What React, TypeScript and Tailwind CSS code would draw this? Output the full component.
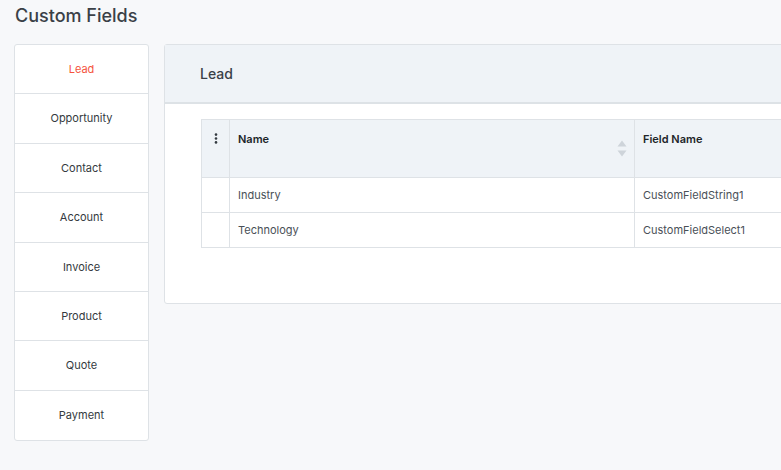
import { useState } from "react";

const tabs = [
  "Lead",
  "Opportunity",
  "Contact",
  "Account",
  "Invoice",
  "Product",
  "Quote",
  "Payment",
];

const rows = [
  { name: "Industry", field: "CustomFieldString1" },
  { name: "Technology", field: "CustomFieldSelect1" },
];

export default function App() {
  const [active, setActive] = useState("Lead");

  return (
    <div
      className="w-[781px] h-[470px] overflow-hidden bg-[#f7f8fa] text-[#343a40]"
      style={{ fontFamily: "Inter, 'Noto Sans', sans-serif" }}
    >
      <div className="h-[44px] pl-[15px] pt-[4px]">
        <h1 className="text-[18px] leading-[24px] font-medium text-[#3a4047]">
          Custom Fields
        </h1>
      </div>

      <div className="flex items-start pl-[14px]">
        {/* sidebar */}
        <div className="w-[135px] shrink-0 bg-white border border-[#dee2e6] rounded-[3px] flex flex-col">
          {tabs.map((t, i) => (
            <button
              key={t}
              onClick={() => setActive(t)}
              className={
                "h-[49.4px] flex items-center justify-center text-[11px] " +
                (i < tabs.length - 1 ? "border-b border-[#dee2e6] " : "") +
                (active === t ? "text-[#f5533d]" : "text-[#343a40]")
              }
            >
              {t}
            </button>
          ))}
        </div>

        {/* main panel */}
        <div className="ml-[15px] w-[900px] shrink-0 bg-white border border-[#dee2e6] rounded-[3px]">
          <div className="h-[59px] bg-[#eff3f7] border-b-2 border-[#dde2e6] flex items-center pl-[35px]">
            <span className="text-[14px] font-medium text-[#3a4047]">
              {active}
            </span>
          </div>

          <div className="pl-[36px] pt-[15px] pb-[55px]">
            <table className="w-[733px] border-collapse text-[11px] table-fixed">
              <colgroup>
                <col className="w-[28px]" />
                <col className="w-[405px]" />
                <col className="w-[300px]" />
              </colgroup>
              <thead>
                <tr className="h-[58px] bg-[#eff3f7]">
                  <th className="border border-[#dee2e6] align-top pt-[13px]">
                    <svg width="4" height="11" viewBox="0 0 4 11" className="mx-auto">
                      <circle cx="2" cy="1.6" r="1.3" fill="#343a40" />
                      <circle cx="2" cy="5.5" r="1.3" fill="#343a40" />
                      <circle cx="2" cy="9.4" r="1.3" fill="#343a40" />
                    </svg>
                  </th>
                  <th className="border border-[#dee2e6] align-top text-left font-semibold text-[#212529] pl-[8px] pt-[11px] relative">
                    Name
                    <svg
                      width="10"
                      height="17"
                      viewBox="0 0 10 17"
                      className="absolute right-[7px] top-[20px]"
                    >
                      <path d="M5 0.5 L9.5 6.5 L0.5 6.5 Z" fill="#ced4da" />
                      <path d="M5 16.5 L9.5 10.5 L0.5 10.5 Z" fill="#ced4da" />
                    </svg>
                  </th>
                  <th className="border border-[#dee2e6] align-top text-left font-semibold text-[#212529] pl-[8px] pt-[11px]">
                    Field Name
                  </th>
                </tr>
              </thead>
              <tbody>
                {rows.map((r) => (
                  <tr key={r.field} className="h-[35px]">
                    <td className="border border-[#dee2e6]"></td>
                    <td className="border border-[#dee2e6] pl-[8px] text-[#495057]">
                      {r.name}
                    </td>
                    <td className="border border-[#dee2e6] pl-[8px] text-[#495057]">
                      {r.field}
                    </td>
                  </tr>
                ))}
              </tbody>
            </table>
          </div>
        </div>
      </div>
    </div>
  );
}
